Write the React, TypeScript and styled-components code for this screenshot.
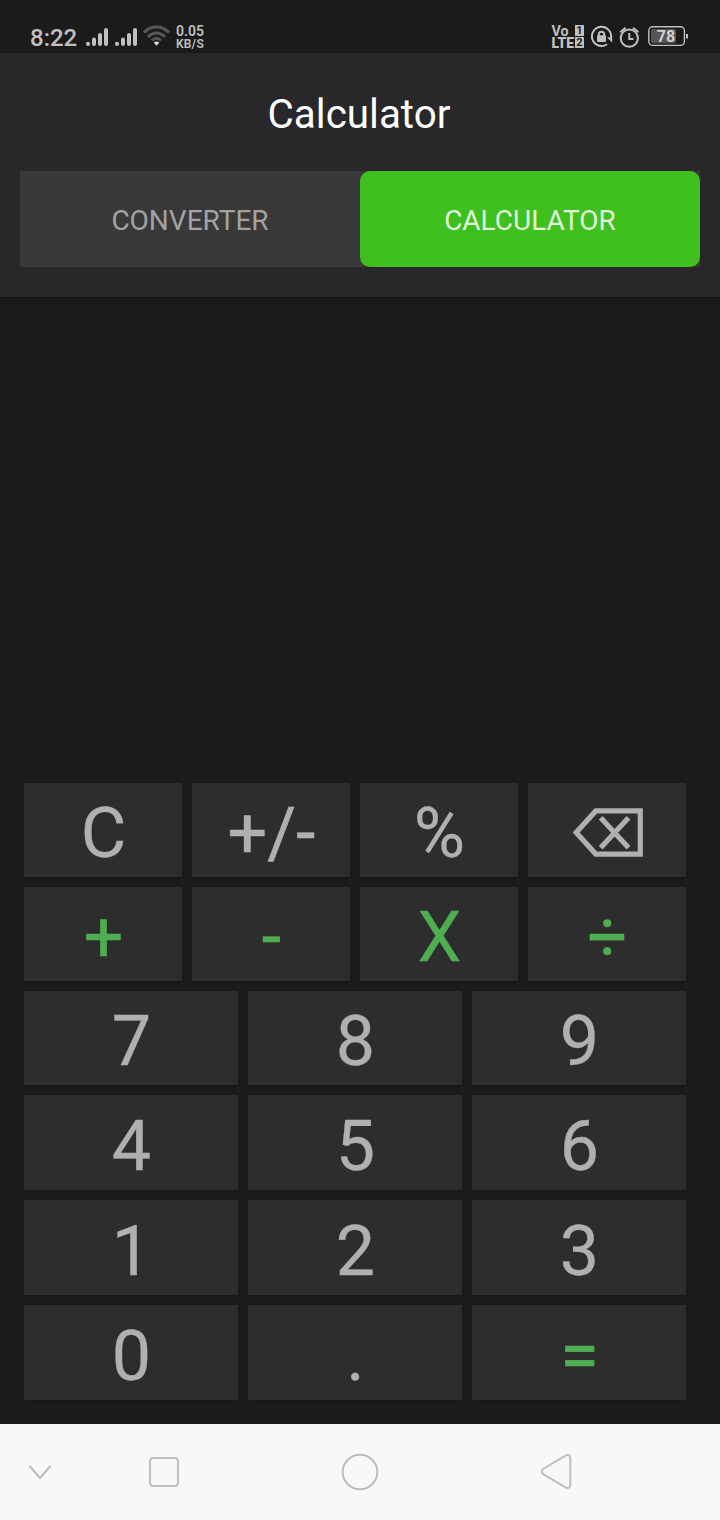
import React from 'react';
import styled, { createGlobalStyle } from 'styled-components';

const GlobalStyle = createGlobalStyle`
  * { box-sizing: border-box; }
  body { margin: 0; background: #1b1b1b; font-family: Roboto, sans-serif; }
  button { font-family: inherit; border: 0; padding: 0; margin: 0; }
`;

const Screen = styled.div`
  width: 720px;
  height: 1520px;
  display: flex;
  flex-direction: column;
  background: #1b1b1b;
  overflow: hidden;
`;

const StatusBar = styled.div`
  height: 53px;
  flex: none;
  padding: 21px 32px 0 30px;
  display: flex;
  justify-content: space-between;
  color: #c0c0c0;
`;

const StatusGroup = styled.div`
  display: flex;
  align-items: flex-start;
  height: 32px;
`;

const Clock = styled.span`
  font-size: 24px;
  line-height: 32px;
  font-weight: 500;
  width: 55px;
  padding-top: 1px;
`;

const Speed = styled.div`
  margin-left: 6px;
  padding-top: 4px;
  font-weight: 600;
  font-size: 14px;
  line-height: 13px;
`;

const SpeedUnit = styled.div`
  font-size: 12px;
  line-height: 12px;
  letter-spacing: 0.2px;
`;

const Header = styled.header`
  height: 244px;
  flex: none;
  background: #28282a;
  padding: 35px 20px 0;
  box-shadow: 0 1px 4px rgba(0, 0, 0, 0.3);
`;

const Title = styled.h1`
  margin: 0 2px 0 0;
  color: #fff;
  font-size: 40.4px;
  font-weight: 400;
  line-height: 54px;
  text-align: center;
`;

const Tabs = styled.div`
  margin-top: 29px;
  height: 96px;
  display: flex;
  background: #393939;
`;

const Tab = styled.button<{ $active?: boolean }>`
  flex: 1;
  padding-top: 2px;
  font-size: 28px;
  border-radius: ${(p) => (p.$active ? '10px' : '0')};
  background: ${(p) => (p.$active ? '#40c01f' : 'transparent')};
  color: ${(p) => (p.$active ? '#dff4da' : '#a3a3a3')};
`;

const Display = styled.div`
  flex: 1;
`;

const Keypad = styled.div`
  height: 617px;
  flex: none;
  margin: 0 34px 24px 24px;
  display: flex;
  flex-direction: column;
  gap: 10px;
`;

const KeyRow = styled.div<{ $height: number }>`
  height: ${(p) => p.$height}px;
  display: flex;
  gap: 10px;
`;

const Key = styled.button<{ $accent?: boolean; $stroke?: number }>`
  flex: 1 1 0;
  min-width: 0;
  display: flex;
  justify-content: center;
  align-items: center;
  padding: 6px 0 0 1px;
  background: #2d2d2d;
  color: ${(p) => (p.$accent ? '#4fae52' : '#b1afb0')};
  font-size: 70px;
  line-height: 82px;
  -webkit-text-stroke: ${(p) => p.$stroke ?? 0.3}px currentColor;
  box-shadow: 0 1px 2px rgba(0, 0, 0, 0.12);
`;

const NavBar = styled.nav`
  height: 96px;
  flex: none;
  background: #f8f8f8;
`;

const Backspace = () => (
  <svg width="72" height="50" viewBox="0 0 72 50" fill="none" stroke="#b1afb0" strokeWidth="5.2">
    <path d="M23.8 2.9H68.3V46.1H23.8L4.2 24.5Z" />
    <path d="M28.7 9.8L56.5 39.8M56.5 9.8L28.7 39.8" />
  </svg>
);

const Signal = () => (
  <svg width="29" height="32" viewBox="0 0 29 32" stroke="#c0c0c0" strokeWidth="4" strokeLinecap="round">
    <path d="M3 22.8V23M9 18.5V23M15 14V23M21 9V23" />
  </svg>
);

const Wifi = () => (
  <svg width="27" height="32" viewBox="0 0 27 32" fill="none" stroke="#575757" strokeWidth="3">
    <path d="M1 11.5C8 4 19 4 26 11.5M5 16C10 10.5 17 10.5 22 16M9 19.5C12 16.5 15 16.5 18 19.5" />
    <path d="M10.8 21.6Q13.5 19.2 16.2 21.6L13.5 24.8Z" fill="#dedede" stroke="none" />
  </svg>
);

const StatusIcons = () => (
  <svg width="138" height="32" viewBox="550 21 138 32" fill="none" stroke="#c0c0c0" strokeWidth="2">
    <g fill="#c0c0c0" stroke="none" fontFamily="Roboto, sans-serif" fontWeight="700">
      <text x="551.5" y="35.6" fontSize="14" textLength="17" lengthAdjust="spacingAndGlyphs">Vo</text>
      <text x="551.4" y="47.8" fontSize="14.5" fontWeight="900" textLength="22.6" lengthAdjust="spacingAndGlyphs">LTE</text>
      <rect x="575" y="25" width="9" height="11" rx="0.5" />
      <rect x="575" y="37" width="9" height="11" rx="0.5" />
      <text x="579.3" y="34.4" fontSize="11" fill="#1b1b1b" textAnchor="middle">1</text>
      <text x="579.5" y="46.4" fontSize="11" fill="#1b1b1b" textAnchor="middle">2</text>
    </g>
    <path d="M607 44.3A9.6 9.6 0 1 1 611 38" />
    <path d="M607 37.2H612.2V42.4Z" fill="#c0c0c0" stroke="none" />
    <rect x="597" y="35.2" width="9" height="6.8" rx="1" fill="#c0c0c0" stroke="none" />
    <path d="M598.8 36V34.5A2.7 2.7 0 0 1 604.2 34.5V36" />
    <circle cx="629.3" cy="38.2" r="8.6" />
    <path d="M629.3 33V39H633.5M620.2 32.2L625.6 27.8M638.4 32.2L633 27.8" />
    <rect x="648.8" y="26.8" width="35.6" height="18.6" rx="4" strokeWidth="1.4" />
    <rect x="651" y="29" width="25" height="14.2" rx="2" fill="#555" stroke="none" />
    <path d="M687 34V38.5" />
    <text x="666" y="42" fontSize="16" fontWeight="700" fill="#d2d2d2" stroke="none" textAnchor="middle" fontFamily="Roboto, sans-serif">78</text>
  </svg>
);

const NavIcons = () => (
  <svg width="720" height="96" viewBox="0 1424 720 96" fill="none" stroke="#bdbdbd" strokeWidth="2" strokeLinecap="round" strokeLinejoin="round">
    <path d="M30 1466.5L40 1478L50 1466.5" />
    <rect x="150" y="1458" width="28" height="28" rx="3" />
    <circle cx="360" cy="1472" r="17.3" />
    <path d="M543 1469L565.5 1455.6Q570.3 1453.8 570.3 1458.5V1484.5Q570.3 1489.2 565.5 1487.4L543 1474Q540.5 1471.5 543 1469Z" />
  </svg>
);

type KeyDef = { label: React.ReactNode; accent?: boolean; name?: string; stroke?: number };

const rows: { height: number; keys: KeyDef[] }[] = [
  {
    height: 94,
    keys: [{ label: 'C' }, { label: '+/-', stroke: 0.5 }, { label: '%' }, { label: <Backspace />, name: 'Backspace' }],
  },
  {
    height: 94,
    keys: [
      { label: '+', accent: true, stroke: 0.5 },
      { label: '-', accent: true, stroke: 0.6 },
      { label: 'X', accent: true },
      { label: '÷', accent: true, stroke: 0.4 },
    ],
  },
  { height: 94, keys: [{ label: '7' }, { label: '8' }, { label: '9' }] },
  { height: 95, keys: [{ label: '4' }, { label: '5' }, { label: '6' }] },
  { height: 95, keys: [{ label: '1' }, { label: '2' }, { label: '3' }] },
  { height: 95, keys: [{ label: '0' }, { label: '.' }, { label: '=', accent: true, stroke: 0.7 }] },
];

export default function App() {
  return (
    <Screen>
      <GlobalStyle />
      <StatusBar>
        <StatusGroup>
          <Clock>8:22</Clock>
          <Signal />
          <Signal />
          <Wifi />
          <Speed>
            0.05
            <SpeedUnit>KB/S</SpeedUnit>
          </Speed>
        </StatusGroup>
        <StatusGroup>
          <StatusIcons />
        </StatusGroup>
      </StatusBar>
      <Header>
        <Title>Calculator</Title>
        <Tabs>
          <Tab>CONVERTER</Tab>
          <Tab $active>CALCULATOR</Tab>
        </Tabs>
      </Header>
      <Display />
      <Keypad>
        {rows.map((row, i) => (
          <KeyRow key={i} $height={row.height}>
            {row.keys.map((k, j) => (
              <Key key={j} $accent={k.accent} $stroke={k.stroke} aria-label={k.name}>
                {k.label}
              </Key>
            ))}
          </KeyRow>
        ))}
      </Keypad>
      <NavBar>
        <NavIcons />
      </NavBar>
    </Screen>
  );
}
